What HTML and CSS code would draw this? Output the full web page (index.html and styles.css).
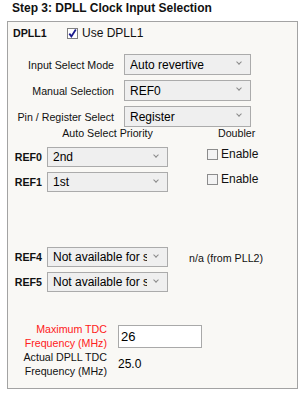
FILE: index.html
```html
<!DOCTYPE html>
<html lang="en">

<head>
    <meta charset="UTF-8">
    <meta name="viewport" content="width=device-width, initial-scale=1.0">
    <title>Step 3: DPLL Clock Input Selection</title>
    <link rel="stylesheet" href="styles.css">
</head>

<body>
    <h1 class="step-title">Step 3: DPLL Clock Input Selection</h1>

    <div class="panel">
        <div class="dpll-row">
            <span class="dpll-name">DPLL1</span>
            <label class="check">
                <svg class="box" width="11" height="11" viewBox="0 0 11 11">
                    <rect x="0.5" y="0.5" width="10" height="10" fill="#fff" stroke="#808080"/>
                    <path d="M2.3 5.6 L4.4 8.4 L8.8 1.6" fill="none" stroke="#1a1a8c" stroke-width="1.8"/>
                </svg>
                Use DPLL1
            </label>
        </div>

        <div class="mode-grid">
            <label for="select_mode">Input Select Mode</label>
            <span class="select-wrap">
                <select id="select_mode">
                    <option>Auto revertive</option>
                    <option>Auto non-revertive</option>
                    <option>Manual</option>
                </select>
            </span>

            <label for="manual_sel">Manual Selection</label>
            <span class="select-wrap">
                <select id="manual_sel">
                    <option>REF0</option>
                    <option>REF1</option>
                </select>
            </span>

            <label for="pin_reg">Pin / Register Select</label>
            <span class="select-wrap">
                <select id="pin_reg">
                    <option>Register</option>
                    <option>Pin</option>
                </select>
            </span>
        </div>

        <div class="ref-grid">
            <div></div>
            <div class="col-head">Auto Select Priority</div>
            <div class="col-head doubler-head">Doubler</div>

            <div class="ref-name">REF0</div>
            <span class="select-wrap">
                <select><option>2nd</option><option>1st</option></select>
            </span>
            <label class="check enable"><span class="box-empty"></span>Enable</label>

            <div class="ref-name">REF1</div>
            <span class="select-wrap">
                <select><option>1st</option><option>2nd</option></select>
            </span>
            <label class="check enable"><span class="box-empty"></span>Enable</label>

            <!-- REF2 / REF3 no se usan en este modo -->
            <div class="ref-name hidden-row">REF2</div>
            <span class="select-wrap hidden-row"><select><option>-</option></select></span>
            <div class="hidden-row"></div>

            <div class="ref-name hidden-row">REF3</div>
            <span class="select-wrap hidden-row"><select><option>-</option></select></span>
            <div class="hidden-row"></div>

            <div class="ref-name">REF4</div>
            <span class="select-wrap">
                <select><option>Not available for selection</option></select>
            </span>
            <div class="na">n/a (from PLL2)</div>

            <div class="ref-name">REF5</div>
            <span class="select-wrap">
                <select><option>Not available for selection</option></select>
            </span>
            <div></div>
        </div>

        <div class="tdc-grid">
            <label class="warn" for="max_tdc">Maximum TDC Frequency (MHz)</label>
            <input type="text" id="max_tdc" value="26">

            <label>Actual DPLL TDC Frequency (MHz)</label>
            <span class="value">25.0</span>
        </div>
    </div>
</body>

</html>
```

FILE: styles.css
```css
body {
    font-family: "Liberation Sans", Arial, sans-serif;
    margin: 0;
    background-color: #fff;
    color: #111;
}

.step-title {
    font-size: 12px;
    line-height: 14px;
    font-weight: bold;
    margin: 1px 0 6px 12px;
}

.panel {
    box-sizing: border-box;
    width: 291px;
    margin-left: 7px;
    padding: 3px 4px 10px 4px;
    border: 1px solid #a3a3a3;
    background-color: #f9f8f5;
}

/* fila DPLL1 */
.dpll-row {
    display: flex;
    align-items: center;
    height: 16px;
}

.dpll-name {
    width: 54px;
    font-size: 8pt;
    font-weight: bold;
    padding-left: 1px;
}

.check {
    display: flex;
    align-items: center;
    gap: 4px;
    font-size: 12px;
}

.box {
    display: block;
}

.box-empty {
    display: block;
    box-sizing: border-box;
    width: 11px;
    height: 11px;
    border: 1px solid #8c8c8c;
    background-color: #f3f3f3;
}

/* selects */
.select-wrap {
    position: relative;
    display: block;
}

.select-wrap::after {
    content: "";
    position: absolute;
    right: 10px;
    top: 6px;
    width: 3px;
    height: 3px;
    border-right: 1px solid #8a8a8a;
    border-bottom: 1px solid #8a8a8a;
    transform: rotate(45deg);
    pointer-events: none;
}

select {
    -webkit-appearance: none;
    appearance: none;
    display: block;
    box-sizing: border-box;
    width: 100%;
    height: 21px;
    margin: 0;
    padding: 0 20px 0 5px;
    border: 1px solid #ababab;
    border-radius: 0;
    background-color: #efefef;
    font-family: "Liberation Sans", Arial, sans-serif;
    font-size: 12px;
    color: #000;
}

.mode-grid {
    display: grid;
    grid-template-columns: 102px 127px;
    column-gap: 10px;
    row-gap: 5px;
    align-items: center;
    margin-top: 13px;
}

.mode-grid label,
.tdc-grid label {
    font-size: 8pt;
    text-align: right;
}

/* tabla REF */
.ref-grid {
    display: grid;
    grid-template-columns: 30px 121px 115px;
    grid-template-rows: 15px repeat(6, 20px);
    column-gap: 5px;
    row-gap: 5px;
}

.ref-grid select {
    height: 20px;
}

.col-head {
    font-size: 8pt;
    line-height: 13px;
    text-align: center;
}

.doubler-head {
    text-align: left;
    padding-left: 45px;
}

.ref-name {
    font-size: 8pt;
    font-weight: bold;
    align-self: center;
    text-align: right;
}

.enable {
    align-self: start;
    margin-top: 1px;
    margin-left: 34px;
    gap: 3px;
    height: 12px;
}

.na {
    font-size: 8pt;
    align-self: center;
    margin-left: 16px;
    padding-top: 2px;
}

.hidden-row {
    visibility: hidden;
}

/* TDC */
.tdc-grid {
    display: grid;
    grid-template-columns: 95px 84px;
    column-gap: 11px;
    align-items: center;
    margin-top: 30px;
}

.tdc-grid label {
    line-height: 14px;
}

.tdc-grid .warn {
    color: #ff2020;
}

input[type="text"] {
    box-sizing: border-box;
    width: 84px;
    height: 23px;
    margin: 0;
    padding: 0 2px;
    border: 1px solid #a9a9a9;
    background-color: #fff;
    font-family: "Liberation Sans", Arial, sans-serif;
    font-size: 13px;
    color: #000;
}

.value {
    font-size: 12px;
    color: #000;
}
```
